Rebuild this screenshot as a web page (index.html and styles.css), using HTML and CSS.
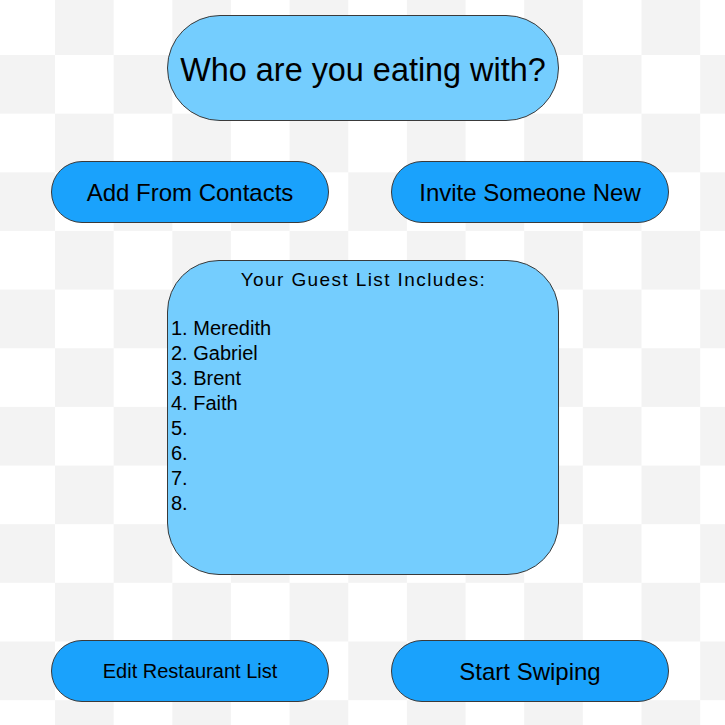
FILE: index.html
```html
<!DOCTYPE html>
<html lang="en">
<head>
<meta charset="utf-8">
<title>Who are you eating with?</title>
<link rel="stylesheet" href="styles.css">
</head>
<body>
<main class="screen">
  <h1 class="title">Who are you eating with?</h1>
  <div class="row row-top">
    <button class="pill-btn">Add From Contacts</button>
    <button class="pill-btn">Invite Someone New</button>
  </div>
  <section class="guest-box">
    <h2 class="guest-head">Your Guest List Includes:</h2>
    <ol class="guest-list">
      <li>Meredith</li>
      <li>Gabriel</li>
      <li>Brent</li>
      <li>Faith</li>
      <li></li>
      <li></li>
      <li></li>
      <li></li>
    </ol>
  </section>
  <div class="row row-bottom">
    <button class="pill-btn pill-small">Edit Restaurant List</button>
    <button class="pill-btn">Start Swiping</button>
  </div>
</main>
</body>
</html>
```

FILE: styles.css
```css
html, body {
  margin: 0;
  padding: 0;
}

body {
  width: 725px;
  height: 725px;
  overflow: hidden;
  font-family: "Liberation Sans", Arial, Helvetica, sans-serif;
  color: #000;
  background-color: #ffffff;
  background-image: repeating-conic-gradient(#f3f3f3 0 25%, #ffffff 0 50%);
  background-size: 117.3px 117.3px;
  background-position: -3.65px -3.65px;
}

.screen {
  display: flex;
  flex-direction: column;
  align-items: center;
  padding-top: 15px;
}

.title {
  box-sizing: border-box;
  width: 392px;
  height: 106px;
  margin: 0 0 0 1px;
  display: flex;
  align-items: center;
  justify-content: center;
  background: #74cdfe;
  border: 1px solid #3a3a3a;
  border-radius: 53px;
  font-size: 32.4px;
  font-weight: normal;
  padding-top: 4px;
}

.row {
  align-self: stretch;
  display: flex;
  gap: 62px;
  padding-left: 51px;
}

.row-top {
  margin-top: 40px;
}

.row-bottom {
  margin-top: 65px;
}

.pill-btn {
  box-sizing: border-box;
  width: 278px;
  height: 62px;
  display: flex;
  align-items: center;
  justify-content: center;
  background: #1aa2fc;
  border: 1px solid #3a3a3a;
  border-radius: 31px;
  font-family: "Liberation Sans", Arial, Helvetica, sans-serif;
  font-size: 24px;
  color: #000;
  padding: 1px 0 0 0;
}

.pill-small {
  font-size: 20px;
}

.guest-box {
  box-sizing: border-box;
  width: 392px;
  height: 315px;
  margin: 37px 0 0 1px;
  background: #74cdfe;
  border: 1px solid #3a3a3a;
  border-radius: 52px;
  padding: 6px 2px 0 3px;
}

.guest-head {
  margin: 0;
  text-align: center;
  font-size: 19px;
  font-weight: normal;
  letter-spacing: 1.4px;
  line-height: 25px;
}

.guest-list {
  margin: 24px 0 0 0;
  padding: 0;
  list-style: decimal inside;
  font-size: 20px;
  line-height: 25px;
}

.guest-list li {
  height: 25px;
}
```
